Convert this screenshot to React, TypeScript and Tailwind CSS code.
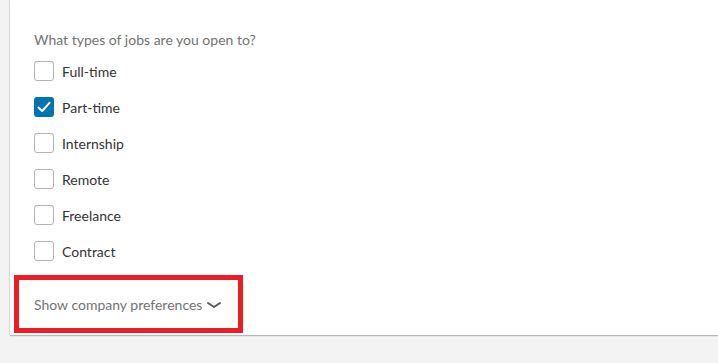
import { useState } from 'react';

const jobTypes = ['Full-time', 'Part-time', 'Internship', 'Remote', 'Freelance', 'Contract'];

export default function App() {
  const [checked, setChecked] = useState<string[]>(['Part-time']);

  function toggle(type: string) {
    setChecked((prev) => (prev.includes(type) ? prev.filter((t) => t !== type) : [...prev, type]));
  }

  return (
    <div className="w-[718px] h-[363px] bg-[#f3f3f3] overflow-hidden" style={{ fontFamily: 'Lato, "Open Sans", sans-serif' }}>
      <div className="ml-[10px] w-[708px] h-[335px] bg-white shadow-[0_1px_1px_rgba(0,0,0,0.25),-1px_0_0_rgba(0,0,0,0.08)] pt-[30px]">
        <p className="pl-[24px] text-[14px] leading-[20px] text-[#737373]">What types of jobs are you open to?</p>

        <div className="mt-[3px] pl-[24px] flex flex-col">
          {jobTypes.map((type) => {
            const isOn = checked.includes(type);
            return (
              <label key={type} className="h-[36px] flex items-center gap-[8px] cursor-pointer">
                <button
                  type="button"
                  onClick={() => toggle(type)}
                  className={`w-[20px] h-[20px] rounded-[3px] flex items-center justify-center ${
                    isOn ? 'bg-[#0073b1]' : 'border border-[#b3b3b3] bg-white'
                  }`}
                >
                  {isOn && (
                    <svg width="16" height="16" viewBox="0 0 16 16" fill="none">
                      <path d="M2.5 8.5 L6.2 12 L13.5 3.8" stroke="white" strokeWidth="2" strokeLinecap="round" strokeLinejoin="round" />
                    </svg>
                  )}
                </button>
                <span className="text-[14px] text-[#333333]">{type}</span>
              </label>
            );
          })}
        </div>

        {/* highlighted link */}
        <div className="mt-[6px] ml-[4px] w-[229px] h-[58px] border-[5px] border-[#ed1c24] flex items-center pl-[15px] pt-[1px]">
          <button type="button" className="flex items-center gap-[4px] text-[14px] text-[#737373]">
            Show company preferences
            <svg width="16" height="10" viewBox="0 0 16 10" fill="none">
              <path d="M2 3 L8 7 L14 3" stroke="#5a5a5a" strokeWidth="2" strokeLinecap="round" strokeLinejoin="round" />
            </svg>
          </button>
        </div>
      </div>
    </div>
  );
}
